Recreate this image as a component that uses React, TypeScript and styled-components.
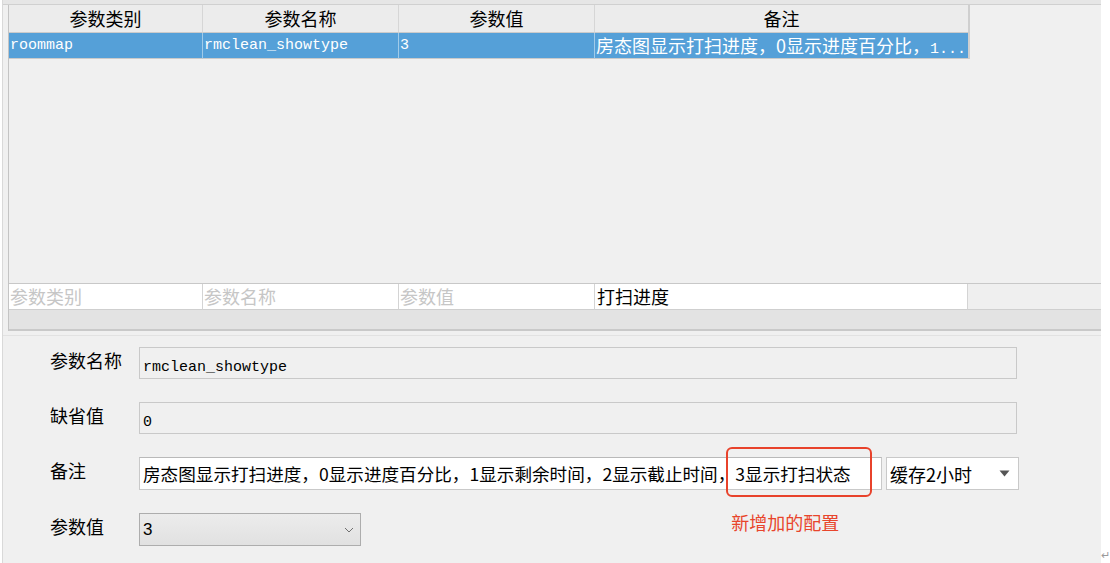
import { FC } from "react";
import styled, { createGlobalStyle } from "styled-components";

const GlobalStyle = createGlobalStyle`
  html, body {
    margin: 0;
    padding: 0;
    background: #fff;
  }
  body {
    font-family: "Noto Sans CJK SC", "Liberation Sans", sans-serif;
    color: #000;
  }
`;

// column widths of the parameter grid, right border included
const COLUMNS = [194, 196, 196, 375];

const Screen = styled.div`
  display: flex;
  width: 1110px;
  height: 563px;
  overflow: hidden;
`;

const Window = styled.div`
  box-sizing: border-box;
  width: 1100px;
  margin-left: 2px;
  border-left: 1px solid #d9d9d9;
  background: #f0f0f0;
  display: flex;
  flex-direction: column;
`;

const Gutter = styled.div`
  flex: 1;
  display: flex;
  align-items: flex-end;
  justify-content: center;
  padding-bottom: 3px;
  background: #fff;
  color: #9a9a9a;
  font-size: 11px;
  line-height: 12px;
`;

const TopStrip = styled.div`
  flex: none;
  box-sizing: border-box;
  height: 5px;
  background: #e6e6e6;
  border-bottom: 1px solid #d0d0d0;
`;

/* ---------- grid ---------- */

const Grid = styled.div`
  flex: none;
  display: flex;
  flex-direction: column;
  height: 326px;
  margin-left: 5px;
  border-left: 1px solid #c4c4c4;
`;

const Row = styled.div<{ $height: number }>`
  flex: none;
  display: flex;
  height: ${(p) => p.$height}px;
`;

const HeaderCell = styled.div<{ $width: number; $last?: boolean }>`
  box-sizing: border-box;
  width: ${(p) => p.$width}px;
  background: #ececec;
  border-right: ${(p) => (p.$last ? "2px solid #cfcfcf" : "1px solid #d6d6d6")};
  border-bottom: 1px solid #cbcbcb;
  text-align: center;
  font-size: 18px;
  line-height: 27px;
`;

const DataCell = styled.div<{ $width: number; $last?: boolean; $mono?: boolean }>`
  box-sizing: border-box;
  width: ${(p) => p.$width}px;
  padding-left: 1px;
  background: #55a0d8;
  color: #fff;
  border-right: ${(p) =>
    p.$last ? "2px solid #cfcfcf" : "1px solid rgba(255, 255, 255, 0.45)"};
  border-bottom: 1px solid #cacaca;
  white-space: nowrap;
  overflow: hidden;
  font-family: ${(p) =>
    p.$mono ? `"Liberation Mono", monospace` : `"Noto Sans CJK SC", sans-serif`};
  font-size: ${(p) => (p.$mono ? 15 : 18)}px;
  line-height: 25px;
`;

const GridBody = styled.div`
  flex: 1;
`;

const FilterRow = styled(Row)`
  border-top: 1px solid #c8c8c8;
`;

const FilterCell = styled.div<{ $width: number; $filled?: boolean }>`
  box-sizing: border-box;
  width: ${(p) => p.$width}px;
  padding-left: ${(p) => (p.$filled ? 2 : 1)}px;
  background: #fff;
  border-right: 1px solid #d4d4d4;
  border-bottom: 1px solid #cfcfcf;
  color: ${(p) => (p.$filled ? "#000" : "#c6c6c6")};
  font-size: 18px;
  line-height: 24px;
  white-space: nowrap;
`;

const FilterTail = styled.div`
  flex: 1;
  background: #efefef;
  border-bottom: 1px solid #cfcfcf;
`;

const Footer = styled.div`
  flex: none;
  box-sizing: border-box;
  height: 21px;
  background: #e3e3e3;
  border-bottom: 2px solid #c9c9c9;
`;

/* ---------- detail form ---------- */

const FormPanel = styled.div`
  flex: 1;
  margin-top: 4px;
  border-top: 1px solid #e2e2e2;
  padding: 11px 0 0 47px;
  display: flex;
  flex-direction: column;
  gap: 23px;
`;

const FieldRow = styled.div`
  display: flex;
  align-items: flex-start;
`;

const Label = styled.div`
  width: 89px;
  flex: none;
  font-size: 18px;
  line-height: 26px;
`;

const TextBox = styled.div<{ $width: number; $height: number; $editable?: boolean }>`
  box-sizing: border-box;
  width: ${(p) => p.$width}px;
  height: ${(p) => p.$height}px;
  padding-left: 3px;
  border: 1px solid #c9c9c9;
  border-top-color: ${(p) => (p.$editable ? "#b9b9b9" : "#c9c9c9")};
  background: ${(p) => (p.$editable ? "#fff" : "#f0f0f0")};
  line-height: ${(p) => p.$height - 2}px;
  font-size: ${(p) => (p.$editable ? 17.6 : 18)}px;
  white-space: nowrap;
`;

const Mono = styled.span`
  font-family: "Liberation Mono", monospace;
  font-size: 15px;
`;

const Marked = styled.span`
  position: relative;
  display: inline-block;
  line-height: 31px;

  &::after {
    content: "";
    position: absolute;
    left: -9px;
    right: -21px;
    top: -11px;
    bottom: -8px;
    border: 2px solid #e8422b;
    border-radius: 6px;
  }
`;

const Callout = styled.span`
  position: absolute;
  left: -4px;
  top: calc(100% + 22px);
  white-space: nowrap;
  color: #e8452c;
  font-size: 18px;
  line-height: 22px;
`;

const DropBox = styled.div`
  box-sizing: border-box;
  display: flex;
  align-items: center;
  width: 133px;
  height: 33px;
  margin-left: 4px;
  padding: 0 8px 0 3px;
  background: #fff;
  border: 1px solid #c9c9c9;
  font-size: 18px;
`;

const DropText = styled.span`
  flex: 1;
`;

const ComboBox = styled.div`
  box-sizing: border-box;
  display: flex;
  align-items: center;
  width: 222px;
  height: 33px;
  padding: 0 6px 0 3px;
  background: linear-gradient(#ececec, #e1e1e1);
  border: 1px solid #adadad;
  font-family: "Liberation Sans", sans-serif;
  font-size: 17px;
`;

const Triangle: FC = () => (
  <svg width="11" height="7" viewBox="0 0 11 7">
    <path d="M0.5 0.5 L10.5 0.5 L5.5 6.5 Z" fill="#555" />
  </svg>
);

const Chevron: FC = () => (
  <svg width="10" height="6" viewBox="0 0 10 6">
    <polyline points="1,1 5,5 9,1" fill="none" stroke="#707070" strokeWidth="1" />
  </svg>
);

const headers = ["参数类别", "参数名称", "参数值", "备注"];
const placeholders = ["参数类别", "参数名称", "参数值"];

const App: FC = () => {
  return (
    <Screen>
      <GlobalStyle />
      <Window>
        <TopStrip />
        <Grid>
          <Row $height={28}>
            {headers.map((h, i) => (
              <HeaderCell key={h} $width={COLUMNS[i]} $last={i === 3}>
                {h}
              </HeaderCell>
            ))}
          </Row>
          <Row $height={26}>
            <DataCell $width={COLUMNS[0]} $mono>
              roommap
            </DataCell>
            <DataCell $width={COLUMNS[1]} $mono>
              rmclean_showtype
            </DataCell>
            <DataCell $width={COLUMNS[2]} $mono>
              3
            </DataCell>
            <DataCell $width={COLUMNS[3]} $last>
              房态图显示打扫进度，0显示进度百分比，<Mono>1...</Mono>
            </DataCell>
          </Row>
          <GridBody />
          <FilterRow $height={26}>
            {placeholders.map((p, i) => (
              <FilterCell key={p} $width={COLUMNS[i]}>
                {p}
              </FilterCell>
            ))}
            <FilterCell $width={COLUMNS[3] - 2} $filled>
              打扫进度
            </FilterCell>
            <FilterTail />
          </FilterRow>
          <Footer />
        </Grid>

        <FormPanel>
          <FieldRow>
            <Label>参数名称</Label>
            <TextBox $width={878} $height={32}>
              <Mono>rmclean_showtype</Mono>
            </TextBox>
          </FieldRow>
          <FieldRow>
            <Label>缺省值</Label>
            <TextBox $width={878} $height={32}>
              <Mono>0</Mono>
            </TextBox>
          </FieldRow>
          <FieldRow>
            <Label>备注</Label>
            <TextBox $width={743} $height={33} $editable>
              房态图显示打扫进度，0显示进度百分比，1显示剩余时间，2显示截止时间，
              <Marked>
                3显示打扫状态
                <Callout>新增加的配置</Callout>
              </Marked>
            </TextBox>
            <DropBox>
              <DropText>缓存2小时</DropText>
              <Triangle />
            </DropBox>
          </FieldRow>
          <FieldRow>
            <Label>参数值</Label>
            <ComboBox>
              <DropText>3</DropText>
              <Chevron />
            </ComboBox>
          </FieldRow>
        </FormPanel>
      </Window>
      <Gutter>↵</Gutter>
    </Screen>
  );
};

export default App;
